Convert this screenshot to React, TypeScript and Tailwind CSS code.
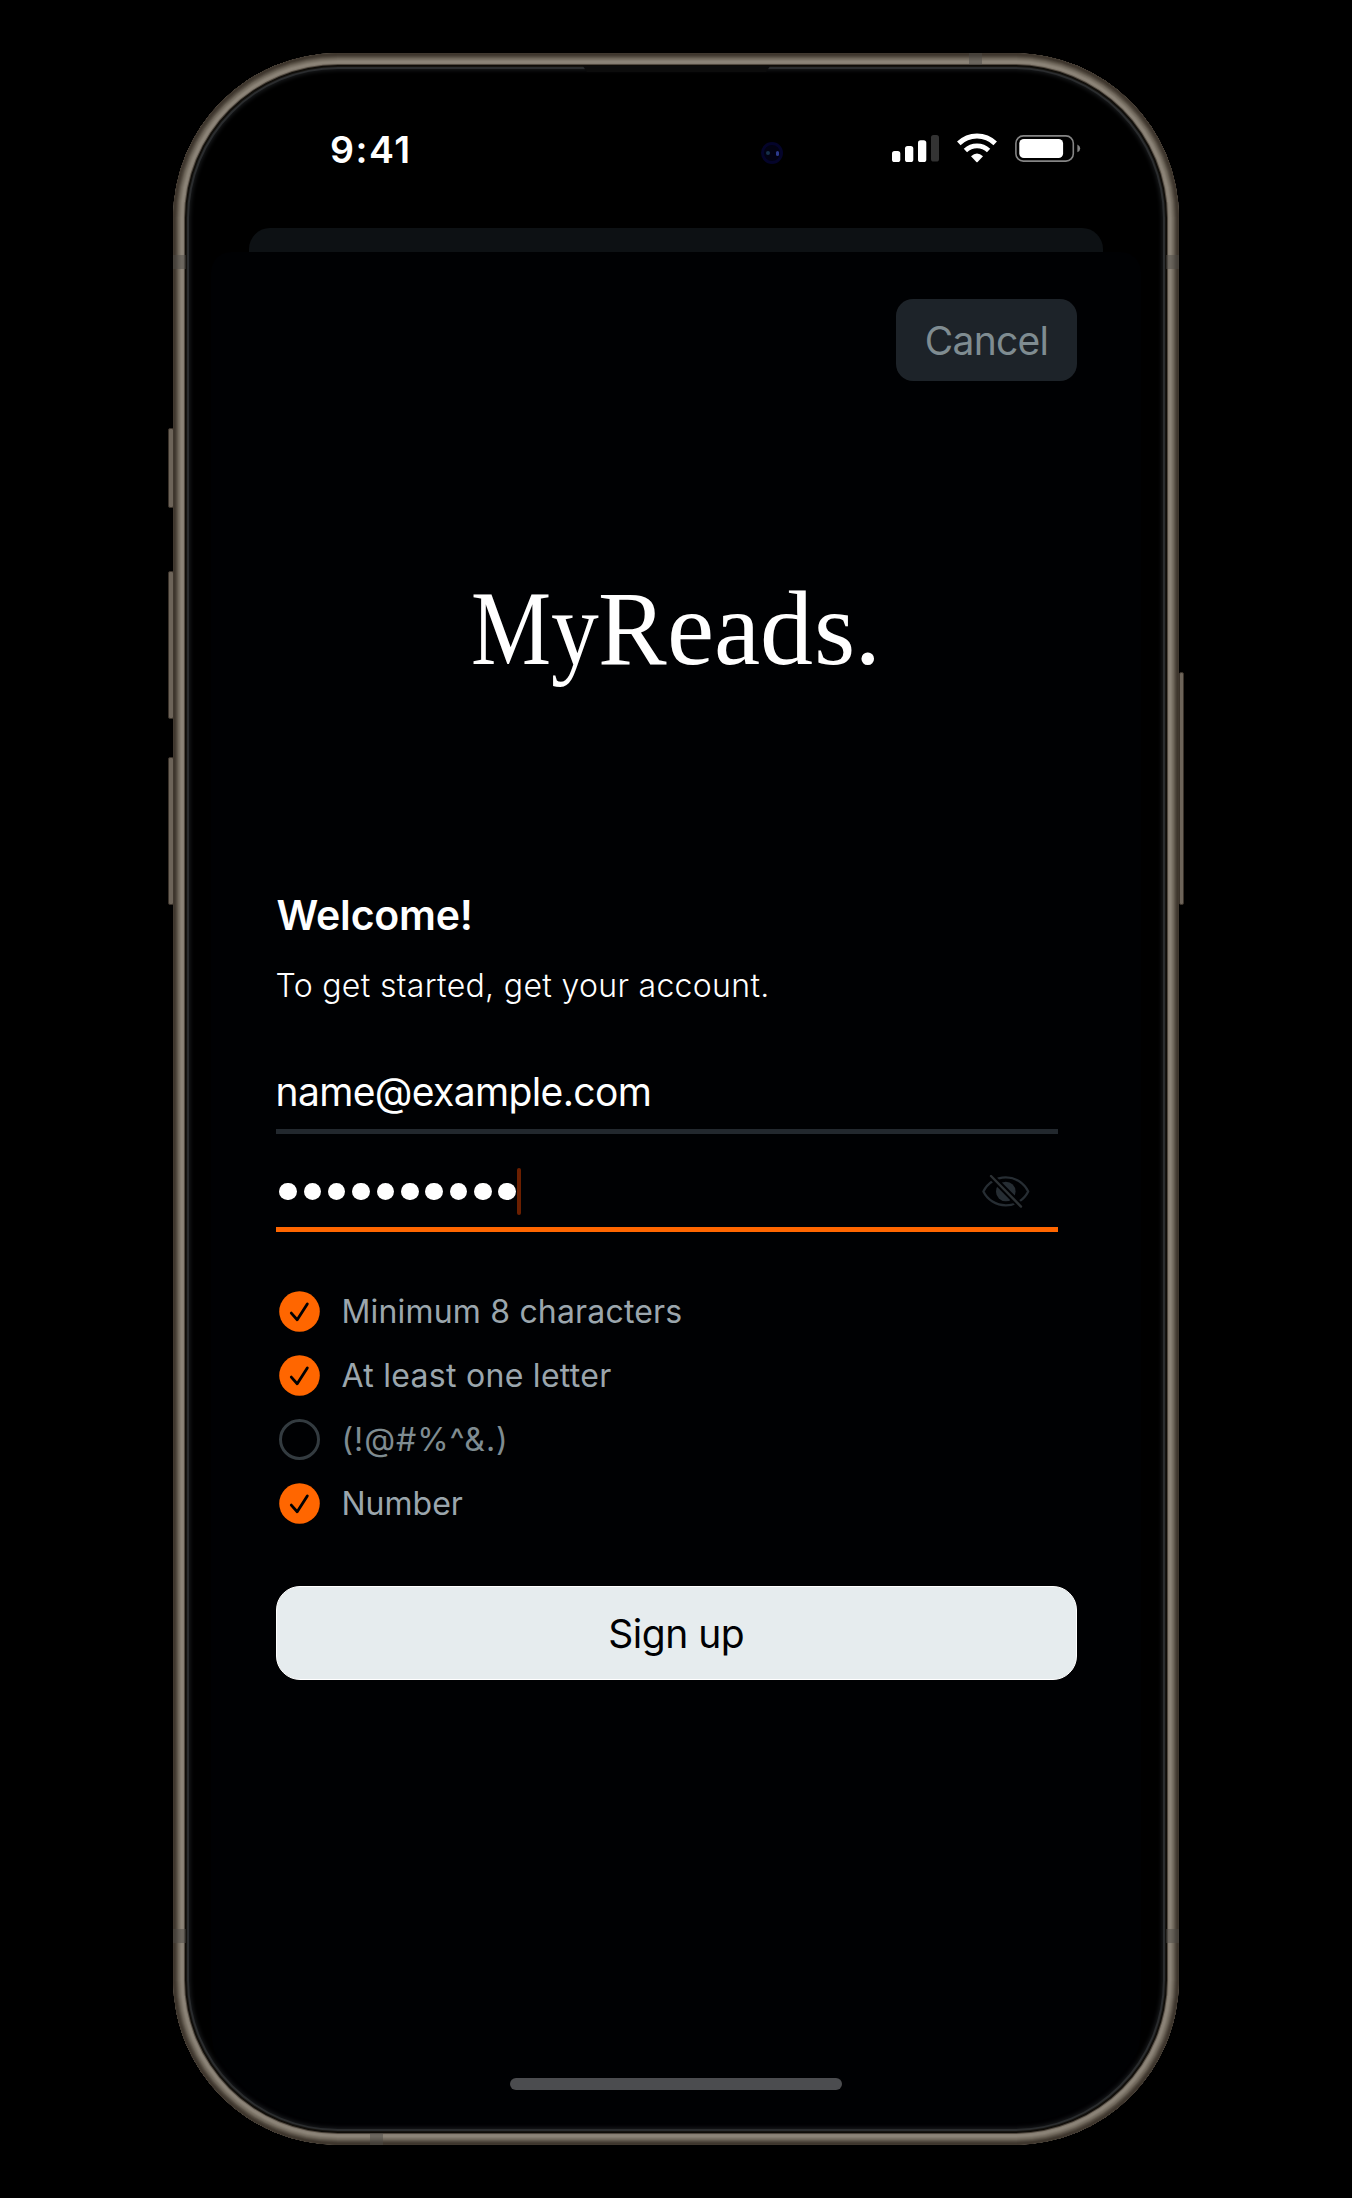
const bands = [
  'left-0 top-[202px] h-[14px] w-[13px]',
  'right-0 top-[202px] h-[14px] w-[13px]',
  'left-0 bottom-[202px] h-[14px] w-[13px]',
  'right-0 bottom-[202px] h-[14px] w-[13px]',
  'left-[796px] top-0 h-[12px] w-[13px]',
  'left-[197px] bottom-0 h-[12px] w-[13px]',
];

const sideButtons = [
  '-left-[5px] top-[375px] h-[80px] w-[6px]',
  '-left-[5px] top-[518px] h-[148px] w-[6px]',
  '-left-[5px] top-[704px] h-[148px] w-[6px]',
  '-right-[5px] top-[619px] h-[233px] w-[5px]',
];

const rules = [
  { label: 'Minimum 8 characters', met: true, spacing: 'tracking-[0.18px]' },
  { label: 'At least one letter', met: true, spacing: 'tracking-[0.28px]' },
  { label: '(!@#%^&.)', met: false, spacing: 'tracking-[0.9px]' },
  { label: 'Number', met: true, spacing: 'tracking-[0px]' },
];

const logo = [
  { c: 'M', s: 'w-[80px] scale-x-[0.85]' },
  { c: 'y', s: 'w-[47.5px] scale-x-[0.9]' },
  { c: 'R', s: 'w-[69px] scale-x-[0.97]' },
  { c: 'e', s: 'w-[47px]' },
  { c: 'a', s: 'w-[46px] scale-x-[0.98]' },
  { c: 'd', s: 'w-[54px]' },
  { c: 's', s: 'w-[40.5px]' },
  { c: '.', s: 'w-[26px]' },
];

function Signal() {
  return (
    <svg width="47" height="27" viewBox="0 0 47 27" fill="#fff">
      <rect x="0" y="16" width="8.3" height="11" rx="2.6" />
      <rect x="13" y="11" width="8.3" height="16" rx="2.6" />
      <rect x="26" y="5.3" width="8.3" height="21.7" rx="2.6" />
      <rect x="39" y="0" width="8" height="26.5" rx="2.6" fill="#333" />
    </svg>
  );
}

function Wifi() {
  return (
    <svg width="40" height="30" viewBox="0 0 40 30" fill="none" stroke="#fff">
      <path d="M1.8 10.4A26 26 0 0 1 38.2 10.4" strokeWidth="5" />
      <path d="M8.4 17.4A17 17 0 0 1 31.6 17.4" strokeWidth="4.8" />
      <path d="M14 23.2Q20 18 26 23.2L20.6 28.9Q20 29.5 19.4 28.9Z" fill="#fff" stroke="none" />
    </svg>
  );
}

function Battery() {
  return (
    <svg width="66" height="27" viewBox="0 0 66 27">
      <rect x="0.9" y="0.9" width="57.4" height="25.2" rx="7.4" fill="none" stroke="#858585" strokeWidth="1.6" />
      <rect x="4.3" y="4" width="43.8" height="19" rx="4.6" fill="#fff" />
      <path d="M62.4 9.6Q65.2 11 65.2 13.4T62.4 17.2Z" fill="#858585" />
    </svg>
  );
}

function EyeOff() {
  return (
    <svg width="48" height="33" viewBox="0 0 48 33" fill="none">
      <path d="M1.4 16.6C5.5 8 14 2.4 23.8 2.4S42.1 8 46.2 16.6C42.1 25 33.6 30.3 23.8 30.3S5.5 25 1.4 16.6Z" stroke="#262d33" strokeWidth="2.3" strokeLinejoin="round" />
      <circle cx="23.8" cy="16.5" r="9.8" fill="#262d33" />
      <path d="M7.5 -.5L40.5 33" stroke="#000103" strokeWidth="6.4" />
      <path d="M9 1L39 31.6" stroke="#2c3134" strokeWidth="2.4" strokeLinecap="round" />
    </svg>
  );
}

function Check() {
  return (
    <svg width="41" height="41" viewBox="0 0 41 41" fill="none">
      <circle cx="20.5" cy="20.5" r="20.3" fill="#ff6600" />
      <path d="M12.3 22.1L18.2 28.8L28.3 13" stroke="#000103" strokeWidth="2.8" strokeLinecap="round" strokeLinejoin="round" />
    </svg>
  );
}

export default function App() {
  return (
    <div className="flex h-[2198px] w-[1352px] justify-center bg-black pt-[53px] font-['Inter',sans-serif] text-white">
      <div className="relative h-[2092px] w-[1006px]">
        {sideButtons.map((b) => (
          <div key={b} className={`absolute rounded-[2px] border border-[#3a322a] bg-[#6d6459] ${b}`} />
        ))}
        <div className="relative flex h-full w-full flex-col overflow-hidden rounded-[165px] bg-black">
          <div className="flex h-[175px] shrink-0 items-start justify-between pl-[157px] pr-[98px] pt-[75px]">
            <div className="text-[37.5px] leading-[44px] font-semibold tracking-[1.5px]">9:41</div>
            <div className="flex items-start pt-[4.5px]">
              <div className="pt-[2.5px]"><Signal /></div>
              <div className="pl-[18px]"><Wifi /></div>
              <div className="pl-[18px] pt-[2.5px]"><Battery /></div>
            </div>
          </div>
          <div className="mx-auto h-[23.5px] w-[854px] shrink-0 rounded-t-[21px] bg-[#0d1114]" />
          <div className="mx-auto flex w-[930px] grow flex-col rounded-t-[20px] rounded-b-[120px] bg-[#000103] pr-[64px] pl-[64.5px]">
            <button className="mt-[47.5px] flex h-[81.5px] w-[181px] items-center justify-center self-end rounded-[17px] bg-[#1d2329] pt-[2px] text-[39px] leading-none font-normal tracking-[-0.75px] text-[#7f8c91]">Cancel</button>
            <h1 className="mt-[178px] flex h-[140px] items-start self-start pl-[195px] font-['Liberation_Serif',serif] text-[106px] leading-[140px]">
              {logo.map((l) => (
                <span key={l.c} className={`inline-block origin-left ${l.s}`}>{l.c}</span>
              ))}
            </h1>
            <h2 className="mt-[191px] h-[50px] pl-px text-[41px] leading-[50px] font-semibold tracking-[-0.2px]">Welcome!</h2>
            <p className="mt-[26px] h-[40px] text-[32px] leading-[40px] font-light tracking-[0.32px] whitespace-nowrap">To get started, get your account.</p>
            <div className="mt-[54.5px] h-[73.5px] w-[782.5px] border-b-[5px] border-[#22282e] text-[39px] leading-[64.5px] tracking-[-0.63px]">name@example.com</div>
            <div className="flex h-[98.5px] w-[782.5px] items-center border-b-[5px] border-[#ff6600] pt-[22px] pr-[28.5px] pl-[3.8px]">
              <div className="flex gap-[6.85px]">
                {Array.from({ length: 10 }, (_, i) => (
                  <span key={i} className="size-[17.5px] rounded-full bg-white" />
                ))}
              </div>
              <span className="ml-px h-[47px] w-[4.5px] rounded-full bg-[#6b1f00]" />
              <span className="ml-auto"><EyeOff /></span>
            </div>
            <ul className="mt-[47px] pl-[3px]">
              {rules.map((r) => (
                <li key={r.label} className="flex h-[64px] items-center gap-[22px] text-[32px] leading-[40px]">
                  {r.met ? <Check /> : <span className="size-[41px] rounded-full border-[3px] border-[#333b40]" />}
                  <span className={`pt-px ${r.met ? 'text-[#9ba6ad]' : 'text-[#7f8c91]'} ${r.spacing}`}>{r.label}</span>
                </li>
              ))}
            </ul>
            <button className="mt-[50.5px] flex h-[94.5px] shrink-0 items-center justify-center rounded-[24px] border border-white bg-[#e6ecee] pt-px text-[39px] leading-none tracking-[-0.5px] text-[#000103]">Sign up</button>
          </div>
          <div className="mx-auto mt-[-67px] mb-[55px] h-[12px] w-[332px] shrink-0 rounded-full bg-[#4b4c4f]" />
          <div className="pointer-events-none absolute inset-0 rounded-[165px] shadow-[inset_0_0_0_1px_#40382f,inset_0_0_0_2px_#3e362d,inset_0_0_0_3px_#453d34,inset_0_0_0_4px_#51493f,inset_0_0_0_5px_#5f574c,inset_0_0_0_6px_#6e665a,inset_0_0_0_7px_#787064,inset_0_0_0_8px_#837b6f,inset_0_0_0_10px_#8b8377,inset_0_0_0_11px_#857d72,inset_0_0_0_12px_#50483e,inset_0_0_0_13px_#0d0b08,inset_0_0_0_14px_#15130f,inset_0_0_0_16px_#2a2c2e,inset_0_0_4px_17px_#1c1e20]" />
          {bands.map((b) => (
            <div key={b} className={`absolute bg-[#4c4a46]/50 ${b}`} />
          ))}
          <div className="absolute top-[13px] left-[410px] h-[6px] w-[187px] bg-[#0c0c0c] [clip-path:polygon(0_0,100%_0,98%_100%,2%_100%)]" />
          <div className="absolute top-[89px] left-[588px] flex size-[22px] items-center justify-center gap-[6px] rounded-full border-[3px] border-[#04042a] bg-[#020212]">
            <span className="size-[4px] rounded-full bg-[#16304a]" />
            <span className="h-[5px] w-[3px] rounded-full bg-[#2c3a8c]" />
          </div>
        </div>
      </div>
    </div>
  );
}
